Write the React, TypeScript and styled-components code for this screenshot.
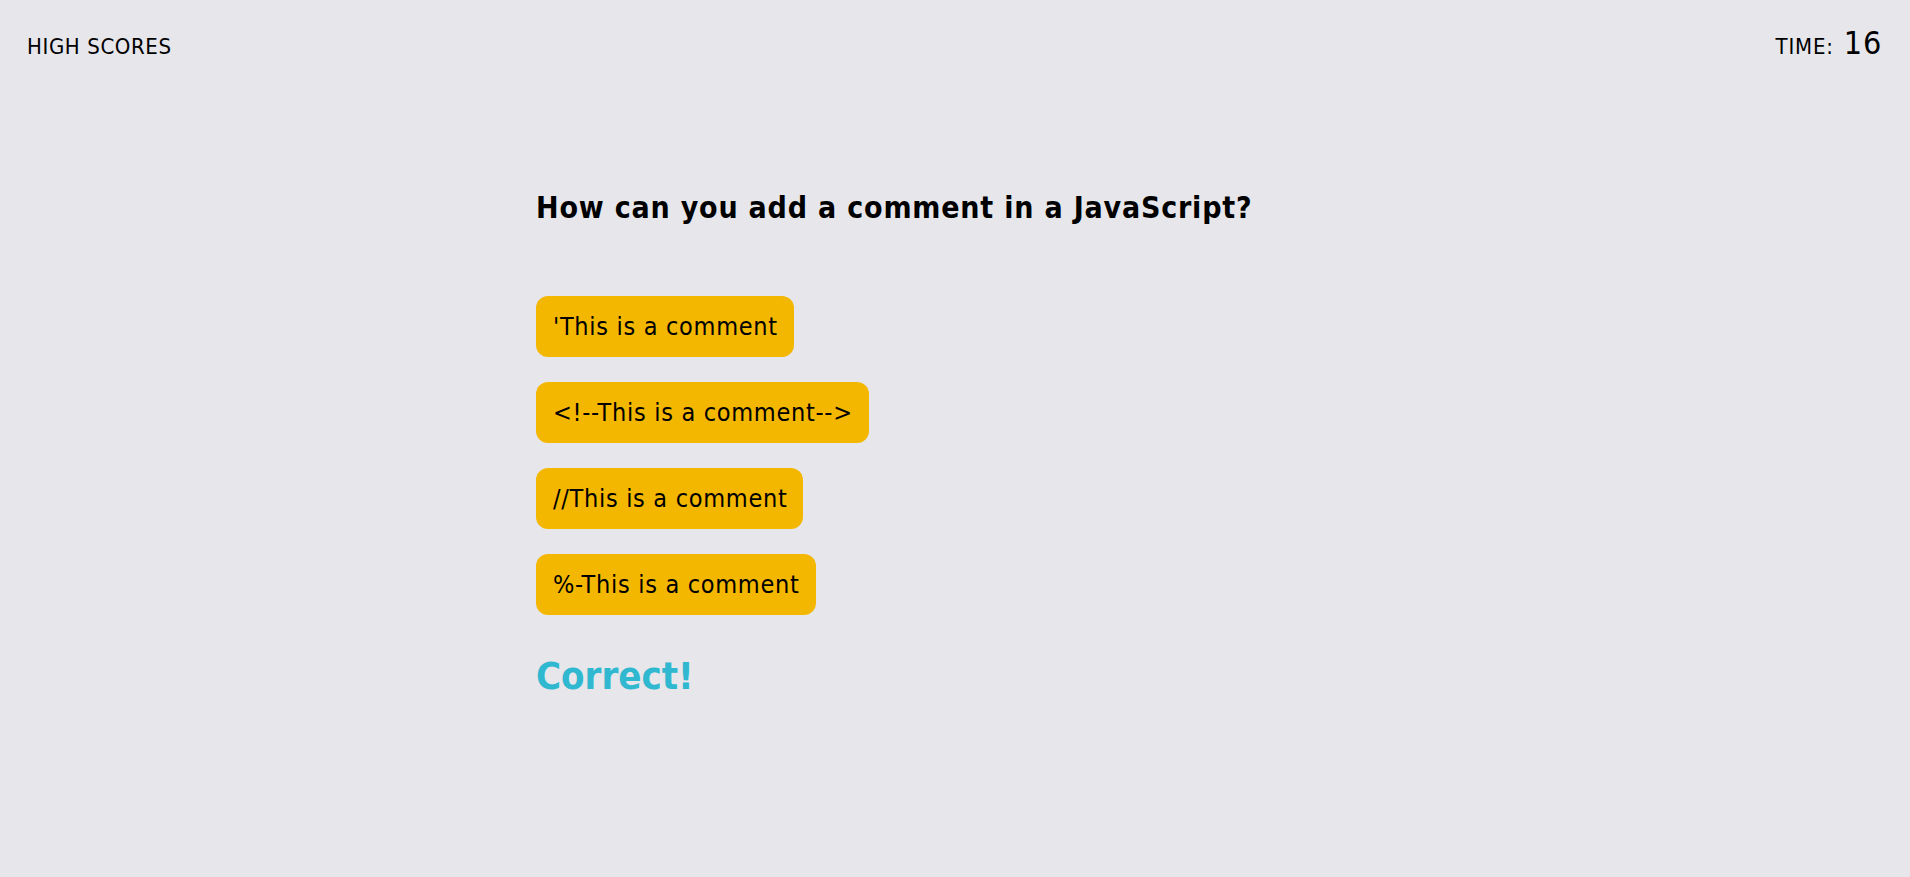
import styled, { createGlobalStyle } from "styled-components";

const answers = [
  "'This is a comment",
  "<!--This is a comment-->",
  "//This is a comment",
  "%-This is a comment",
];

const GlobalStyle = createGlobalStyle`
  html, body {
    margin: 0;
    padding: 0;
    background: #e6e6eb;
    font-family: "DejaVu Sans Condensed", "DejaVu Sans", sans-serif;
    color: #000;
  }
`;

const App = () => {
  return (
    <>
      <GlobalStyle />
      <Header>
        <ScoresLink>High Scores</ScoresLink>
        <Timer>
          time: <TimeValue>16</TimeValue>
        </Timer>
      </Header>
      <Quiz>
        <Question>How can you add a comment in a JavaScript?</Question>
        <AnswerList>
          {answers.map(answer => (
            <li key={answer}>
              <AnswerButton>{answer}</AnswerButton>
            </li>
          ))}
        </AnswerList>
        <Result>Correct!</Result>
      </Quiz>
    </>
  );
};
export default App;

const Header = styled.header`
  display: flex;
  justify-content: space-between;
  align-items: baseline;
  padding: 24px 28px 0 27px;
`;
const ScoresLink = styled.a`
  font-size: 22px;
  text-transform: uppercase;
  letter-spacing: 0.6px;
  cursor: pointer;
`;
const Timer = styled.div`
  font-size: 22px;
  text-transform: uppercase;
  letter-spacing: 0.8px;
`;
const TimeValue = styled.span`
  font-size: 32px;
  margin-left: 3px;
`;
const Quiz = styled.main`
  width: 838px;
  margin: 0 auto;
  padding-top: 128px;
`;
const Question = styled.h1`
  margin: 0 0 71px 0;
  font-size: 30px;
  font-weight: bold;
  letter-spacing: 0.8px;
`;
const AnswerList = styled.ul`
  list-style: none;
  margin: 0;
  padding: 0;
  display: flex;
  flex-direction: column;
  align-items: flex-start;
  gap: 25px;
`;
const AnswerButton = styled.button`
  font-family: inherit;
  font-size: 25px;
  height: 61px;
  padding: 0 16px 0 17px;
  border: none;
  border-radius: 12px;
  background: #f4b700;
  color: #000;
  letter-spacing: 0.7px;
  cursor: pointer;
`;
const Result = styled.p`
  margin: 39px 0 0 0;
  font-size: 38px;
  font-weight: bold;
  color: #2fb8cf;
`;
